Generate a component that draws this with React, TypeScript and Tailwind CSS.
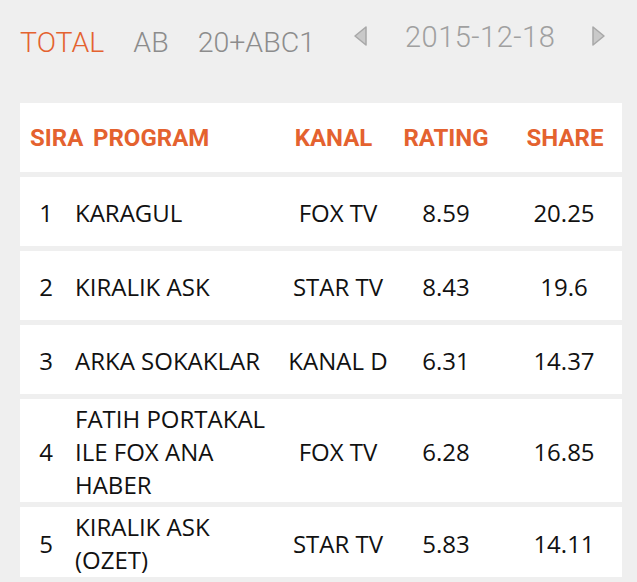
import React from "react";

const rows = [
  { no: 1, program: ["KARAGUL"], kanal: "FOX TV", rating: "8.59", share: "20.25" },
  { no: 2, program: ["KIRALIK ASK"], kanal: "STAR TV", rating: "8.43", share: "19.6" },
  { no: 3, program: ["ARKA SOKAKLAR"], kanal: "KANAL D", rating: "6.31", share: "14.37" },
  { no: 4, program: ["FATIH PORTAKAL", "ILE FOX ANA", "HABER"], kanal: "FOX TV", rating: "6.28", share: "16.85" },
  { no: 5, program: ["KIRALIK ASK", "(OZET)"], kanal: "STAR TV", rating: "5.83", share: "14.11" },
];

const Arrow = ({ dir }: { dir: "left" | "right" }) => (
  <svg width="15" height="22" viewBox="0 0 15 22">
    {dir === "left" ? (
      <polygon points="13,2 2,11 13,20" fill="#c9c9c9" stroke="#a8a8a8" strokeWidth="1.5" strokeLinejoin="round" />
    ) : (
      <polygon points="2,2 13,11 2,20" fill="#c9c9c9" stroke="#a8a8a8" strokeWidth="1.5" strokeLinejoin="round" />
    )}
  </svg>
);

const App = () => {
  return (
    <div className="min-h-[582px] bg-[#efefef] pb-6">
      {/* filter tabs + date picker */}
      <div className="flex items-start pl-[20px] pt-[26px] h-[103px] font-['Roboto',sans-serif] font-light text-[28.5px] leading-[33px]">
        <span className="text-[#e4622f]">TOTAL</span>
        <span className="ml-[29px] text-[#8c8c8c]">AB</span>
        <span className="ml-[29px] text-[#8c8c8c]">20+ABC1</span>
        <span className="ml-[38px] -mt-[1px]">
          <Arrow dir="left" />
        </span>
        <span className="ml-[37px] -mt-[5px] text-[29px] text-[#a0a0a0] tracking-[0.5px]">2015-12-18</span>
        <span className="ml-[36px] -mt-[1px]">
          <Arrow dir="right" />
        </span>
      </div>

      <div className="ml-[20px] w-[602px] flex flex-col gap-[5px]">
        <div className="grid grid-cols-[73px_194px_102px_114px_1fr] items-center h-[69px] bg-white font-['Roboto',sans-serif] font-bold text-[24px] text-[#e4622f]">
          <div className="pl-[10px]">SIRA</div>
          <div>PROGRAM</div>
          <div className="text-center pr-[9px]">KANAL</div>
          <div className="text-center">RATING</div>
          <div className="text-center pl-[5px]">SHARE</div>
        </div>

        {rows.map((r) => (
          <div
            key={r.no}
            className="grid grid-cols-[52px_215px_102px_114px_1fr] items-center min-h-[69px] py-[1px] bg-white font-['Open_Sans',sans-serif] text-[24px] leading-[33px] text-[#111]"
          >
            <div className="text-center pt-[2px]">{r.no}</div>
            <div className="pl-[3px] pt-[2px]">
              {r.program.map((line, i) => (
                <div key={i}>{line}</div>
              ))}
            </div>
            <div className="text-center pt-[2px]">{r.kanal}</div>
            <div className="text-center pt-[2px]">{r.rating}</div>
            <div className="text-center pl-[3px] pt-[2px]">{r.share}</div>
          </div>
        ))}

        {/* next row, scrolled below the fold */}
        <div className="h-[69px] bg-white" />
      </div>
    </div>
  );
};

export default App;
